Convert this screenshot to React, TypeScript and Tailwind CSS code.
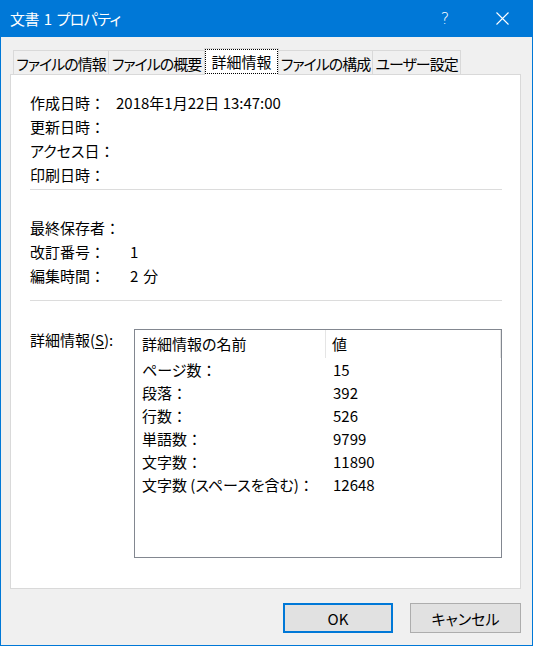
import React from "react";

const tabs = [
  { label: "ファイルの情報", w: "w-[96px]", sel: false },
  { label: "ファイルの概要", w: "w-[97px]", sel: false },
  { label: "詳細情報", w: "w-[75px]", sel: true },
  { label: "ファイルの構成", w: "w-[95px]", sel: false },
  { label: "ユーザー設定", w: "w-[89px]", sel: false },
];

const C = () => <span className="[font-feature-settings:normal]">：</span>;

const rows: [string, string][] = [
  ["ページ数", "15"],
  ["段落", "392"],
  ["行数", "526"],
  ["単語数", "9799"],
  ["文字数", "11890"],
  ["文字数 (スペースを含む)", "12648"],
];

export default function App() {
  return (
    <div
      className="w-[533px] h-[646px] bg-[#f0f0f0] flex flex-col border-x border-b border-[#0078d7] text-[15px] text-black [font-feature-settings:'palt']"
      style={{ fontFamily: '"Noto Sans CJK JP", "Noto Sans", sans-serif' }}
    >
      {/* Title bar */}
      <div className="h-[37px] shrink-0 bg-[#0078d7] text-white flex items-center pl-[9px] pr-[7px]">
        <div className="flex-1 flex items-center leading-[37px] tracking-[-0.6px] whitespace-nowrap">
          <span>文書</span>
          <span className="ml-[5px]">1</span>
          <span className="ml-[5px]">プロパティ</span>
        </div>
        <div
          className="w-[46px] h-[37px] mr-[11px] flex items-center justify-center text-[16px] font-light"
          style={{ fontFamily: '"DejaVu Sans", sans-serif' }}
        >
          ?
        </div>
        <div className="w-[46px] h-[37px] flex items-center justify-center">
          <svg width="13" height="13" viewBox="0 0 13 13">
            <path d="M0.5 0.5 L12.5 12.5 M12.5 0.5 L0.5 12.5" stroke="white" strokeWidth="1.1" fill="none" />
          </svg>
        </div>
      </div>

      {/* Body */}
      <div className="flex-1 flex flex-col pl-[9px] pr-[11px]">
        {/* Tabs */}
        <div className="mt-[11px] h-[26px] flex items-end pl-[3px] relative z-10">
          {tabs.map((t, i) =>
            t.sel ? (
              <div
                key={i}
                className={`${t.w} h-[27px] -mb-px -ml-px bg-white border-x border-t border-[#d9d9d9] flex items-center justify-center px-[1px] pt-[1px] pb-[2px]`}
              >
                <div className="w-full h-full outline-1 outline-dotted outline-black flex items-center justify-center leading-none whitespace-nowrap">
                  {t.label}
                </div>
              </div>
            ) : (
              <div
                key={i}
                className={`${t.w} h-[24px] ${i === 0 ? "" : "-ml-px"} bg-[#f0f0f0] border-x border-t border-[#d9d9d9] flex items-center justify-center leading-none pt-[1px] whitespace-nowrap tracking-[-1px] overflow-hidden`}
              >
                {t.label}
              </div>
            )
          )}
        </div>

        {/* Panel */}
        <div className="h-[515px] bg-white border border-[#d9d9d9] flex flex-col pl-[19px] pr-[18px] pt-[16px]">
          <div className="grid grid-cols-[86px_1fr] auto-rows-[24px] leading-[24px] whitespace-nowrap">
            <div>作成日時<C /></div>
            <div>2018年1月22日 13:47:00</div>
            <div>更新日時<C /></div>
            <div></div>
            <div>アクセス日<C /></div>
            <div></div>
            <div>印刷日時<C /></div>
            <div></div>
          </div>
          <div className="mt-[2px] h-px bg-[#dcdcdc]" />
          <div className="mt-[26px] grid grid-cols-[100px_1fr] auto-rows-[24px] leading-[24px] whitespace-nowrap">
            <div className="col-span-2">最終保存者<C /></div>
            <div>改訂番号<C /></div>
            <div>1</div>
            <div>編集時間<C /></div>
            <div>
              2<span className="ml-[5px]">分</span>
            </div>
          </div>
          <div className="mt-[12px] h-px bg-[#dcdcdc]" />

          <div className="mt-[28px] flex">
            <div className="w-[104px] leading-[22px] whitespace-nowrap">
              詳細情報(<span className="underline underline-offset-2">S</span>):
            </div>
            <div className="w-[368px] h-[229px] border border-[#828790] bg-white flex flex-col">
              <div className="h-[28px] flex leading-[28px]">
                <div className="w-[191px] pl-[7px] border-r border-[#e5e5e5]">詳細情報の名前</div>
                <div className="w-[175px] pl-[6px] border-r border-[#e5e5e5]">値</div>
              </div>
              {rows.map(([k, v], i) => (
                <div key={i} className="h-[23px] flex leading-[23px] whitespace-nowrap">
                  <div className="w-[191px] pl-[7px]">
                    {k}
                    <C />
                  </div>
                  <div className="pl-[7px]">{v}</div>
                </div>
              ))}
            </div>
          </div>
        </div>

        {/* Buttons */}
        <div className="mt-[14px] flex justify-end gap-[17px]">
          <button className="w-[110px] h-[30px] bg-[#e1e1e1] border-2 border-[#0078d7] flex items-center justify-center leading-none">
            OK
          </button>
          <button className="w-[111px] h-[30px] bg-[#e1e1e1] border border-[#adadad] flex items-center justify-center leading-none">
            キャンセル
          </button>
        </div>
      </div>
    </div>
  );
}
